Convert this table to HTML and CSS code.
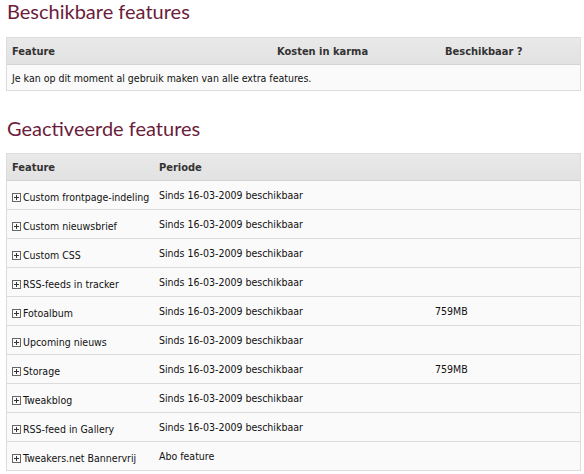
FILE: index.html
```html
<!DOCTYPE html>
<html lang="nl">
<head>
<meta charset="utf-8">
<title>Features</title>
<link rel="stylesheet" href="styles.css">
</head>
<body>
<div class="page">
  <h2 class="title">Beschikbare features</h2>
  <div class="frame">
    <table class="list list-avail">
      <colgroup><col class="c1"><col class="c2"><col class="c3"></colgroup>
      <thead>
        <tr><th>Feature</th><th>Kosten in karma</th><th>Beschikbaar ?</th></tr>
      </thead>
      <tbody>
        <tr><td colspan="3">Je kan op dit moment al gebruik maken van alle extra features.</td></tr>
      </tbody>
    </table>
  </div>

  <h2 class="title title-second">Geactiveerde features</h2>
  <div class="frame">
    <table class="list list-active">
      <colgroup><col class="d1"><col class="d2"><col class="d3"></colgroup>
      <thead>
        <tr><th>Feature</th><th>Periode</th><th></th></tr>
      </thead>
      <tbody>
        <tr><td class="feat"><span class="plus"></span>Custom frontpage-indeling</td><td class="per">Sinds 16-03-2009 beschikbaar</td><td class="per"></td></tr>
        <tr><td class="feat"><span class="plus"></span>Custom nieuwsbrief</td><td class="per">Sinds 16-03-2009 beschikbaar</td><td class="per"></td></tr>
        <tr><td class="feat"><span class="plus"></span>Custom CSS</td><td class="per">Sinds 16-03-2009 beschikbaar</td><td class="per"></td></tr>
        <tr><td class="feat"><span class="plus"></span>RSS-feeds in tracker</td><td class="per">Sinds 16-03-2009 beschikbaar</td><td class="per"></td></tr>
        <tr><td class="feat"><span class="plus"></span>Fotoalbum</td><td class="per">Sinds 16-03-2009 beschikbaar</td><td class="per">759MB</td></tr>
        <tr><td class="feat"><span class="plus"></span>Upcoming nieuws</td><td class="per">Sinds 16-03-2009 beschikbaar</td><td class="per"></td></tr>
        <tr><td class="feat"><span class="plus"></span>Storage</td><td class="per">Sinds 16-03-2009 beschikbaar</td><td class="per">759MB</td></tr>
        <tr><td class="feat"><span class="plus"></span>Tweakblog</td><td class="per">Sinds 16-03-2009 beschikbaar</td><td class="per"></td></tr>
        <tr><td class="feat"><span class="plus"></span>RSS-feed in Gallery</td><td class="per">Sinds 16-03-2009 beschikbaar</td><td class="per"></td></tr>
        <tr><td class="feat"><span class="plus"></span>Tweakers.net Bannervrij</td><td class="per">Abo feature</td><td class="per"></td></tr>
      </tbody>
    </table>
  </div>
</div>
</body>
</html>
```
FILE: styles.css
```css
html, body {
  margin: 0;
  padding: 0;
  background: #ffffff;
}

.page {
  padding: 0 3px 0 6px;
  font-family: "DejaVu Sans Condensed", "DejaVu Sans", sans-serif;
  font-size: 10.5px;
  color: #111;
}

.title {
  margin: 0;
  padding: 0 0 0 1px;
  height: 37px;
  box-sizing: border-box;
  font-family: "Lato", "Open Sans", sans-serif;
  font-weight: 400;
  font-size: 20px;
  line-height: 22px;
  color: #6b1d3b;
}

.title-second {
  height: 62px;
  padding-top: 26px;
}

.frame {
  border: 1px solid #dcdcdc;
  box-shadow: inset -4px 0 0 #fff, inset -5px 0 0 #e4e4e4;
}

.list {
  width: 100%;
  border-collapse: collapse;
  table-layout: fixed;
}

.c1 { width: 265px; }
.c2 { width: 168px; }
.d1 { width: 147px; }
.d2 { width: 276px; }

.list th {
  height: 26px;
  padding: 0 5px;
  text-align: left;
  font-size: 11px;
  font-weight: bold;
  color: #333;
  background: linear-gradient(#e9e9e9, #e2e2e2);
  border-bottom: 1px solid #d4d4d4;
}

.list td {
  padding: 0 5px;
  background: #fafafa;
  border-bottom: 1px solid #dcdcdc;
  vertical-align: middle;
}

.list-avail td {
  height: 25px;
}

.list-active td {
  height: 28px;
}

.list-active td.feat {
  height: 24px;
  padding-top: 4px;
  white-space: nowrap;
}

.list tbody tr:last-child td {
  border-bottom: none;
}

.plus {
  display: inline-block;
  position: relative;
  width: 7px;
  height: 7px;
  margin-right: 2px;
  border: 1px solid #666;
  vertical-align: -1px;
}

.plus::before,
.plus::after {
  content: "";
  position: absolute;
  background: #333;
}

.plus::before {
  left: 1px;
  top: 3px;
  width: 5px;
  height: 1px;
}

.plus::after {
  left: 3px;
  top: 1px;
  width: 1px;
  height: 5px;
}
```
